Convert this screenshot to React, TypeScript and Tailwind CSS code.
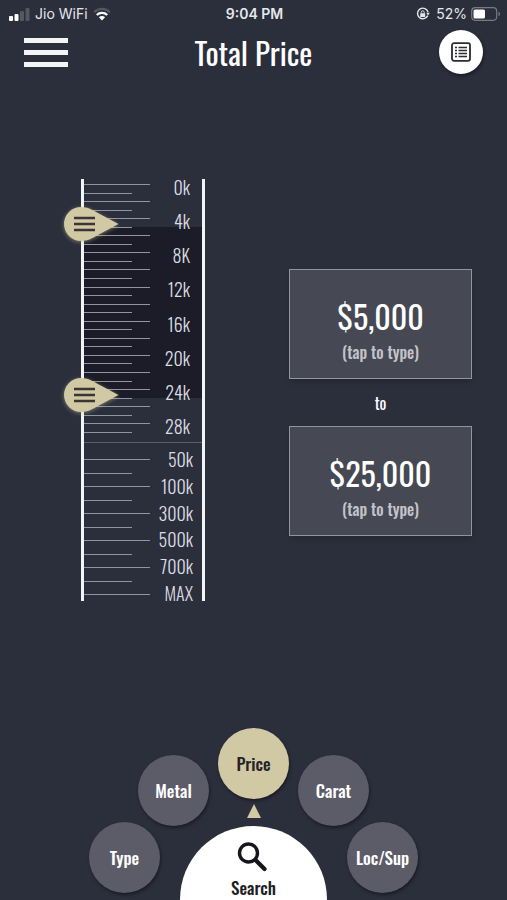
import React, { useState } from "react";
import clsx from "clsx";

const UPPER_LABELS = ["0k", "4k", "8K", "12k", "16k", "20k", "24k", "28k"];
const LOWER_LABELS = ["50k", "100k", "300k", "500k", "700k", "MAX"];

function StatusBar() {
  return (
    <div className="grid h-7 grid-cols-3 items-center pr-1.5 pl-2 font-['Inter',sans-serif] text-sm text-gray-200">
      <div className="flex items-center gap-[5px]">
        <svg viewBox="0 0 22 13" className="h-[13px] w-[22px]">
          <rect x="1" y="8" width="4" height="5" rx="1" fill="#fff" />
          <rect x="6.5" y="6" width="4" height="7" rx="1" fill="#fff" />
          <rect x="12" y="3" width="4" height="10" rx="1" fill="#555763" />
          <rect x="17.5" y="0" width="4" height="13" rx="1" fill="#555763" />
        </svg>
        <span className="whitespace-nowrap">Jio WiFi</span>
        <svg viewBox="0 0 18 14" className="h-[14px] w-[18px]" fill="none">
          <path d="M1.2 5.2a11 11 0 0 1 15.6 0" stroke="#555763" strokeWidth="2.3" />
          <path d="M3.8 8a7.4 7.4 0 0 1 10.4 0" stroke="#fff" strokeWidth="2.3" />
          <path d="M5.9 10.2a4.4 4.4 0 0 1 6.2 0L9 13.5z" fill="#fff" />
        </svg>
      </div>
      <span className="text-center font-semibold whitespace-nowrap">9:04 PM</span>
      <div className="flex items-center justify-end gap-1">
        <svg viewBox="0 0 14 14" className="mr-0.5 h-[14px] w-[14px]" fill="none" stroke="#e5e7eb">
          <path d="M11.7 8.6A5.3 5.3 0 1 1 12 5.2" strokeWidth="1.4" />
          <path d="M10.2 5.8h3.6L12 8.6z" fill="#e5e7eb" stroke="none" />
          <rect x="4.2" y="6.2" width="5" height="3.8" rx=".6" fill="#e5e7eb" stroke="none" />
          <path d="M5.2 6.4V5.3a1.5 1.5 0 0 1 3 0v1.1" strokeWidth="1" />
        </svg>
        <span>52%</span>
        <svg viewBox="0 0 30 14" className="h-[14px] w-[30px]">
          <rect x=".7" y=".7" width="25" height="12.6" rx="3.5" fill="none" stroke="#777984" strokeWidth="1.2" />
          <rect x="2.5" y="2.5" width="11.5" height="9" rx="1.5" fill="#fff" />
          <path d="M27.5 4.8c2 .5 2 3.9 0 4.4z" fill="#777984" />
        </svg>
      </div>
    </div>
  );
}

function Ticks({ count, className }: { count: number; className: string }) {
  return (
    <div className={clsx("flex flex-col justify-between", className)}>
      {Array.from({ length: count }, (_, i) => (
        <div key={i} className={clsx("h-px bg-[#92949f]", i % 2 === 0 ? "w-[66px]" : "w-12")} />
      ))}
    </div>
  );
}

interface HandleProps {
  label: string;
  value: number;
  onChange: (value: number) => void;
}

// Teardrop marker that sits on the left rail. 0k starts 5px below the top.
function Handle({ label, value, onChange }: HandleProps) {
  const center = 2 + (value / 1000) * 8.55;

  return (
    <div className="absolute -left-5 h-9 w-[56px]" style={{ top: `${Math.round(center - 18)}px` }}>
      <svg viewBox="0 0 56 36" className="h-9 w-[56px] overflow-visible drop-shadow-[0_1px_2px_#d0c9a480]">
        <path
          d="M17 1C24 1 28.5 4 33 6.5L54.5 18 33 29.5C28.5 32 24 35 17 35a17 17 0 0 1 0-34z"
          fill="#d0c9a4"
        />
        <path d="M10 12h21M10 18h21M10 24h21" stroke="#3a3537" strokeWidth="2.3" />
      </svg>
      <input
        type="range"
        aria-label={label}
        min={0}
        max={29000}
        step={1000}
        value={value}
        onChange={(e) => onChange(Number(e.target.value))}
        className="absolute inset-0 h-full w-full cursor-pointer opacity-0"
      />
    </div>
  );
}

interface PriceBoxProps {
  label: string;
  value: number;
  onChange: (value: number) => void;
}

function PriceBox({ label, value, onChange }: PriceBoxProps) {
  return (
    <label className="flex h-[110px] w-full flex-col items-center border border-[#92949f] bg-[#464853] pt-[26px] shadow-md">
      <input
        type="text"
        inputMode="numeric"
        aria-label={label}
        value={`$${value.toLocaleString("en-US")}`}
        onChange={(e) => onChange(Number(e.target.value.replace(/\D/g, "")))}
        className="h-10 w-full bg-transparent text-center text-[32px] font-normal text-white outline-none"
      />
      <span className="mt-1.5 text-base leading-5 font-medium text-[#c3c4cb]">(tap to type)</span>
    </label>
  );
}

function DialButton({ label, active, className }: { label: string; active?: boolean; className?: string }) {
  return (
    <button
      type="button"
      className={clsx(
        "size-[71px] shrink-0 rounded-full text-[17px] font-medium shadow-[1px_2px_3px_#1b1c26]",
        active ? "bg-[#d0c9a4] text-[#25232a]" : "bg-[#5c5c68] text-white",
        className
      )}
    >
      {label}
    </button>
  );
}

export default function App() {
  const [min, setMin] = useState(5000);
  const [max, setMax] = useState(25000);

  const shadeTop = 5 + (min / 1000) * 8.55;
  const shadeHeight = ((max - min) / 1000) * 8.55;

  return (
    <div className="flex min-h-screen flex-col bg-[#2b2e3b] font-['Oswald','Liberation_Sans_Narrow','Liberation_Sans',sans-serif] text-white">
      <StatusBar />

      <header className="flex h-12 items-center justify-between px-6">
        <button type="button" aria-label="Menu" className="flex w-11 flex-col gap-[7px]">
          <span className="h-[5px] bg-gray-100" />
          <span className="h-[5px] bg-gray-100" />
          <span className="h-[5px] bg-gray-100" />
        </button>
        <h1 className="text-[31px] font-normal">Total Price</h1>
        <button
          type="button"
          aria-label="List view"
          className="flex size-11 items-center justify-center rounded-full bg-white shadow-[1px_2px_3px_#1b1c26]"
        >
          <svg viewBox="0 0 20 20" className="size-5" fill="none" stroke="#2b2b30">
            <rect x="1" y="1.2" width="18" height="17.6" rx="2" strokeWidth="1.8" />
            <path d="M7.5 5.5h8.500M7.5 8.500h8.500M7.500 11.500h8.500M7.500 14.500h8.500" strokeWidth="1.700" />
            <path d="M4 5.500h2M4 8.500h2M4 11.500h2M4 14.500h2" strokeWidth="1.700" />
          </svg>
        </button>
      </header>

      <main className="flex items-start justify-between pt-[103px] pr-[35px] pb-10 pl-[81px]">
        <section
          aria-label="Price range"
          className="relative w-[124px] border-x-[3px] border-gray-100 text-lg font-light text-[#dcdde3]"
        >
          <div
            className="absolute inset-x-0 bg-[#1b1c27]"
            style={{ top: `${Math.round(shadeTop)}px`, height: `${Math.round(shadeHeight)}px` }}
          />
          <div className="relative flex h-[264px] justify-between border-b border-[#5d5f6b] pr-3">
            <Ticks count={30} className="mt-[5px] h-[249px]" />
            <div className="flex h-[255px] flex-col justify-between text-right leading-4">
              {UPPER_LABELS.map((l) => (
                <span key={l}>{l}</span>
              ))}
            </div>
          </div>
          <div className="relative flex h-[158px] justify-between pr-[9px]">
            <Ticks count={11} className="mt-4 h-[136px]" />
            <div className="mt-2 flex h-[150px] flex-col justify-between text-right leading-4">
              {LOWER_LABELS.map((l) => (
                <span key={l}>{l}</span>
              ))}
            </div>
          </div>
          <Handle label="Minimum price" value={min} onChange={setMin} />
          <Handle label="Maximum price" value={max} onChange={setMax} />
        </section>

        <section className="mt-[90px] flex w-[183px] flex-col items-center">
          <PriceBox label="From" value={min} onChange={setMin} />
          <span className="flex h-[47px] items-center text-base font-normal">to</span>
          <PriceBox label="To" value={max} onChange={setMax} />
        </section>
      </main>

      <nav className="mt-auto flex flex-col items-center">
        <div className="flex h-[98px] justify-center gap-[9px]">
          <DialButton label="Metal" className="mt-[27px]" />
          <div className="flex flex-col items-center gap-[5px]">
            <DialButton label="Price" active />
            <svg viewBox="0 0 14 14" className="size-[14px]">
              <path d="M7 0l7 14H0z" fill="#d0c9a4" />
            </svg>
          </div>
          <DialButton label="Carat" className="mt-[27px]" />
        </div>
        <div className="-mt-1 flex justify-center gap-5">
          <DialButton label="Type" />
          <button
            type="button"
            className="mt-1 flex h-[74px] w-[147px] flex-col items-center rounded-t-full bg-white pt-4 text-[17px] leading-5 font-medium text-[#1d1d24]"
          >
            <svg viewBox="0 0 30 30" className="mb-1.5 size-[30px] overflow-visible" fill="none" stroke="#15151b">
              <circle cx="9.5" cy="11" r="9" strokeWidth="3.4" />
              <path d="M16.5 18l9 9" strokeWidth="4.2" strokeLinecap="round" />
            </svg>
            Search
          </button>
          <DialButton label="Loc/Sup" />
        </div>
      </nav>
    </div>
  );
}
